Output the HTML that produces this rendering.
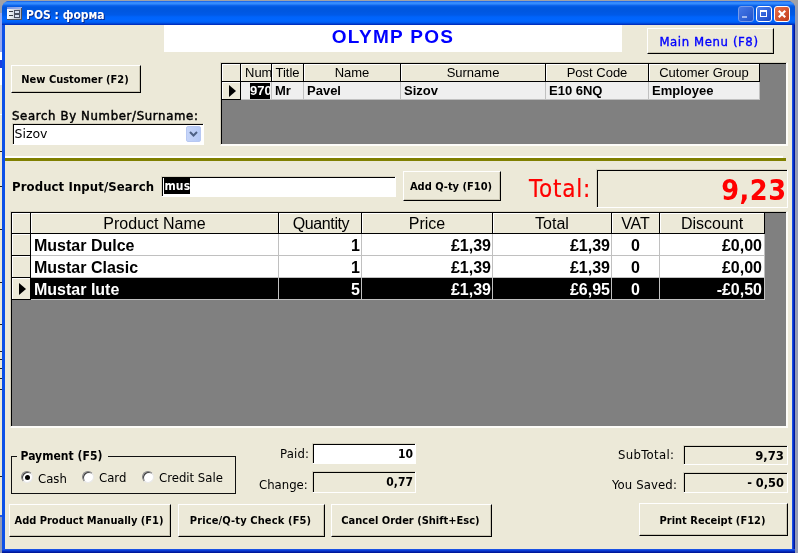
<!DOCTYPE html>
<html><head><meta charset="utf-8">
<style>
html,body{margin:0;padding:0;}
body{width:798px;height:553px;overflow:hidden;position:relative;background:#ECE9D8;font-family:"DejaVu Sans Condensed","DejaVu Sans","Liberation Sans",sans-serif;}
#root{will-change:transform;position:absolute;left:0;top:0;width:798px;height:553px;overflow:hidden;background:linear-gradient(#a2a2a6 0px,#a2a2a6 3px,#939bb5 12px);}
.abs{position:absolute;}
/* window */
#win{position:absolute;left:2px;top:1px;width:793px;height:552px;background:linear-gradient(90deg,#0c50e8 0px,#0c50e8 3px,#0a48d8 3px,#0a48d8 790px,#1a50e2 790px,#1a50e2 791px,#0830c8 791px,#0830c8 792px,#00189c 792px);border-radius:8px 8px 0 0;}
#tbar{position:absolute;left:0;top:0;width:793px;height:24px;border-radius:7px 7px 0 0;
 background:linear-gradient(#0a50e0 0px,#2d84fb 1px,#3a90ff 2px,#3088fc 3px,#0e64ec 4.5px,#0058e0 6px,#0057e0 10px,#005ae8 14px,#0064fb 16px,#0066ff 20px,#0058ea 22px,#0030c0 23.2px,#0030c0 24px);}
#client{position:absolute;left:3px;top:24px;width:787px;height:524px;background:#ECE9D8;overflow:hidden;}
#ttext{position:absolute;left:24px;top:6px;color:#fff;font-weight:bold;font-size:12px;line-height:16px;white-space:nowrap;font-family:"DejaVu Sans Condensed","DejaVu Sans",sans-serif;text-shadow:1px 1px 0 #0a2a8a;}
.cap{position:absolute;top:5px;width:16px;height:16px;border:1px solid #fff;border-radius:3px;box-sizing:border-box;}
/* controls; coordinates relative to root (page) */
.btn{position:absolute;box-sizing:border-box;background:#ECE9D8;border-top:1px solid #fff;border-left:1px solid #fff;border-right:1px solid #000;border-bottom:1px solid #000;
 box-shadow:inset -1px -1px 0 #c9c5b2;font-weight:bold;font-size:11px;color:#000;text-align:center;white-space:nowrap;padding-top:1px;padding-right:2px;}
.sunk{position:absolute;box-sizing:border-box;border-top:1px solid #d6d2c0;border-left:1px solid #d6d2c0;border-right:1px solid #fff;border-bottom:1px solid #fff;}
.sunk.two{border-right:2px solid #fdfcf8;border-bottom:2px solid #fdfcf8;}
.sunk>.in{position:absolute;left:0;top:0;right:0;bottom:0;border-top:1px solid #000;border-left:1px solid #000;}
.lbl{position:absolute;white-space:nowrap;font-size:13px;line-height:16px;color:#000;}
.b{font-weight:bold;}
.ar{font-family:"Liberation Sans",sans-serif;}
.hdr{position:absolute;box-sizing:border-box;background:#ECE9D8;border-right:1px solid #000;border-bottom:1px solid #000;box-shadow:inset 1px 1px 0 #fff;text-align:center;font-family:"Liberation Sans",sans-serif;white-space:nowrap;overflow:hidden;}
.cell{position:absolute;box-sizing:border-box;white-space:nowrap;overflow:hidden;font-family:"Liberation Sans",sans-serif;font-weight:bold;}
</style></head><body>
<div id="root">
 <!-- background bits left of the window -->
 <div class="abs" style="left:0;top:13px;width:2px;height:39px;background:#95a8ee"></div>
 <div class="abs" style="left:0;top:52px;width:2px;height:8px;background:#fff"></div>
 <div class="abs" style="left:0;top:60px;width:2px;height:8px;background:#1a40e0"></div>
 <div class="abs" style="left:0;top:68px;width:2px;height:17px;background:#fff"></div>
 <div class="abs" style="left:0;top:85px;width:2px;height:430px;background:#ECE9D8"></div>
 <div class="abs" style="left:0;top:114px;width:2px;height:1px;background:#fff"></div>
 <div class="abs" style="left:0;top:151px;width:2px;height:1px;background:#222"></div><div class="abs" style="left:0;top:186px;width:2px;height:1px;background:#222"></div><div class="abs" style="left:0;top:229px;width:2px;height:1px;background:#222"></div><div class="abs" style="left:0;top:282px;width:2px;height:1px;background:#222"></div><div class="abs" style="left:0;top:324px;width:2px;height:1px;background:#222"></div><div class="abs" style="left:0;top:351px;width:2px;height:1px;background:#222"></div><div class="abs" style="left:0;top:359px;width:2px;height:1px;background:#222"></div><div class="abs" style="left:0;top:368px;width:2px;height:1px;background:#222"></div><div class="abs" style="left:0;top:378px;width:2px;height:1px;background:#222"></div><div class="abs" style="left:0;top:389px;width:2px;height:1px;background:#222"></div><div class="abs" style="left:0;top:476px;width:2px;height:1px;background:#222"></div>
 <div class="abs" style="left:0;top:515px;width:2px;height:2px;background:#2a5be0"></div>
 <div id="win">
  <div id="tbar">
   <svg class="abs" style="left:5px;top:6px" width="15" height="13" viewBox="0 0 15 13">
    <defs><linearGradient id="ig" x1="0" x2="1" y1="0" y2="0"><stop offset="0" stop-color="#fbfcff"/><stop offset="1" stop-color="#aeb2c2"/></linearGradient>
    <linearGradient id="it" x1="0" x2="1" y1="0" y2="0"><stop offset="0" stop-color="#7a96e2"/><stop offset="1" stop-color="#9fb4ec"/></linearGradient></defs>
    <rect x="0" y="0" width="15" height="13" fill="url(#ig)"/><rect x="0" y="0" width="15" height="2" fill="url(#it)"/>
    <rect x="14" y="1" width="1" height="12" fill="#505058"/><rect x="0" y="12" width="15" height="1" fill="#505058"/>
    <rect x="2" y="4" width="4" height="1" fill="#3a3a44"/><rect x="2" y="8" width="4" height="1" fill="#3a3a44"/>
    <rect x="7.5" y="3.5" width="5" height="3" fill="#d8deef" stroke="#4a4e60"/><rect x="7.5" y="7.5" width="5" height="3" fill="#d8deef" stroke="#4a4e60"/>
   </svg>
   <div id="ttext">POS : форма</div>
   <div class="cap" style="left:736px;background:linear-gradient(135deg,#4a7be8,#2452c8);border-color:#7f9fe8;opacity:.95"><div class="abs" style="left:3px;bottom:3px;width:5px;height:2px;background:#a9bdf0"></div></div>
   <div class="cap" style="left:754px;background:linear-gradient(135deg,#4a80f0,#1c48c4)"><div class="abs" style="left:3px;top:3px;width:7px;height:7px;box-sizing:border-box;border:1px solid #fff;border-top:2px solid #fff"></div></div>
   <div class="cap" style="left:772px;background:linear-gradient(135deg,#e8714a,#c23a18)"><svg class="abs" style="left:0;top:0" width="14" height="14" viewBox="0 0 13 13"><path d="M3.5 3.5L9.5 9.5M9.5 3.5L3.5 9.5" stroke="#fff" stroke-width="2"/></svg></div>
  </div>
  <div id="client"></div>
  <div class="abs" style="left:0;top:548px;width:793px;height:4px;background:linear-gradient(#1a52e4 0px,#1a52e4 1px,#0a3cd6 1px,#0a3cd6 2px,#0428b6 2px,#0428b6 3px,#00189c 3px)"></div>
 </div>

 <!-- top area -->
 <div class="abs" style="left:164px;top:25px;width:458px;height:27px;background:#fff"></div>
 <div class="lbl ar b" id="olymp" style="left:164px;top:25px;width:458px;text-align:center;font-size:19px;line-height:24px;letter-spacing:1.3px;color:#0000ff">OLYMP POS</div>
 <div class="btn" id="bmain" style="left:647px;top:28px;width:127px;height:26px;font-size:13px;font-weight:normal;-webkit-text-stroke:0.35px #0000ff;letter-spacing:0.6px;padding-right:3px;line-height:23px;color:#0000ff"><span id="mm">Main Menu (F8)</span></div>
 <div class="btn" id="bnew" style="left:11px;top:65px;width:130px;height:28px;line-height:25px">New Customer (F2)</div>
 <div class="lbl" id="lsearch" style="left:12px;top:108px;letter-spacing:0.66px;-webkit-text-stroke:0.45px #000">Search By Number/Surname:</div>
 <div class="sunk" style="left:12px;top:123px;width:192px;height:22px;background:#fff"><div class="in"></div></div>
 <div class="lbl" id="tsizov" style="left:14.5px;top:126px;font-size:12.5px;font-family:'DejaVu Sans',sans-serif">Sizov</div>
 <div class="abs" id="cbtn" style="left:186px;top:126px;width:15px;height:16px;box-sizing:border-box;border:1px solid #b7c8f2;border-radius:2px;background:linear-gradient(90deg,#c6d5f9,#b4c9f6)">
  <svg class="abs" style="left:2px;top:4px" width="9" height="6" viewBox="0 0 9 6"><path d="M1 1L4.5 4.5L8 1" fill="none" stroke="#4d6185" stroke-width="2"/></svg></div>

 <!-- subform 1 -->
 <div class="sunk two" style="left:220px;top:62px;width:568px;height:84px;background:#808080"><div class="in"></div></div>
 <div class="hdr" style="left:222px;top:64px;width:19px;height:18px"></div>
 <div class="hdr" style="left:241px;top:64px;width:31px;height:18px;font-size:13px;line-height:17px" id="hnum"><span style="position:absolute;left:4px;top:0">Num</span></div>
 <div class="hdr" style="left:272px;top:64px;width:32px;height:18px;font-size:13px;line-height:17px">Title</div>
 <div class="hdr" style="left:304px;top:64px;width:97px;height:18px;font-size:13px;line-height:17px">Name</div>
 <div class="hdr" style="left:401px;top:64px;width:145px;height:18px;font-size:13px;line-height:17px">Surname</div>
 <div class="hdr" style="left:546px;top:64px;width:103px;height:18px;font-size:13px;line-height:17px">Post Code</div>
 <div class="hdr" style="left:649px;top:64px;width:111px;height:18px;font-size:13px;line-height:17px">Cutomer Group</div>
 <div class="hdr" style="left:222px;top:82px;width:19px;height:18px"><svg class="abs" style="left:7px;top:2.5px" width="7" height="12" viewBox="0 0 6 10" preserveAspectRatio="none"><path d="M0 0L6 5L0 10Z" fill="#000"/></svg></div>
 <div class="abs" style="left:241px;top:82px;width:519px;height:18px;background:#efefef;border-bottom:1px solid #c0c0c0;box-sizing:border-box"></div>
 <div class="abs" style="left:271px;top:82px;width:1px;height:18px;background:#c0c0c0"></div>
 <div class="abs" style="left:303px;top:82px;width:1px;height:18px;background:#c0c0c0"></div>
 <div class="abs" style="left:400px;top:82px;width:1px;height:18px;background:#c0c0c0"></div>
 <div class="abs" style="left:545px;top:82px;width:1px;height:18px;background:#c0c0c0"></div>
 <div class="abs" style="left:648px;top:82px;width:1px;height:18px;background:#c0c0c0"></div>
 <div class="abs" style="left:759px;top:82px;width:1px;height:18px;background:#c0c0c0"></div>
 <div class="cell" id="c970" style="left:250px;top:83px;width:20px;height:16px;font-size:13px;line-height:16px;background:#000;color:#fff">970</div>
 <div class="cell" style="left:275px;top:83px;font-size:13px;line-height:16px">Mr</div>
 <div class="cell" id="cpavel" style="left:307px;top:83px;font-size:13px;line-height:16px">Pavel</div>
 <div class="cell" style="left:404px;top:83px;font-size:13px;line-height:16px">Sizov</div>
 <div class="cell" style="left:549px;top:83px;font-size:13px;line-height:16px">E10 6NQ</div>
 <div class="cell" style="left:652px;top:83px;font-size:13px;line-height:16px">Employee</div>

 <!-- olive line -->
 <div class="abs" style="left:5px;top:156px;width:778px;height:2px;background:#fff"></div>
 <div class="abs" style="left:5px;top:158px;width:781px;height:3px;background:#808000"></div>

 <!-- product input row -->
 <div class="lbl b" id="lprod" style="left:12px;top:179px;letter-spacing:0.1px">Product Input/Search</div>
 <div class="sunk" style="left:161px;top:176px;width:235px;height:21px;background:#fff"><div class="in"></div></div>
 <div class="lbl b" id="tmus" style="left:164px;top:178px;height:16px;background:#000;color:#fff;padding:0 0 0 0.5px;font-size:12px;line-height:17px;letter-spacing:0.1px">mus</div>
 <div class="btn" id="bqty" style="left:403px;top:171px;width:98px;height:30px;line-height:27px">Add Q-ty (F10)</div>
 <div class="lbl" id="ltotal" style="left:529px;top:174.4px;font-size:24px;line-height:30px;letter-spacing:0.8px;-webkit-text-stroke:0.2px #f00;color:#ff0000">Total:</div>
 <div class="sunk" style="left:596px;top:169px;width:192px;height:39px"><div class="in"></div></div>
 <div class="lbl b" id="ttotal" style="left:600px;top:173px;width:186.5px;text-align:right;font-size:28.5px;line-height:36px;letter-spacing:0.5px;color:#ff0000">9,23</div>

 <!-- subform 2 -->
 <div class="sunk two" style="left:10px;top:211px;width:778px;height:217px;background:#808080"><div class="in"></div></div>
 <div class="hdr" style="left:12px;top:213px;width:19px;height:21px"></div>
 <div class="hdr" style="left:31px;top:213px;width:248px;height:21px;font-size:16px;line-height:21px" id="hpn">Product Name</div>
 <div class="hdr" style="left:279px;top:213px;width:83px;height:21px;font-size:16px;line-height:21px;letter-spacing:-0.4px;padding-left:2px">Quantity</div>
 <div class="hdr" style="left:362px;top:213px;width:131px;height:21px;font-size:16px;line-height:21px">Price</div>
 <div class="hdr" style="left:493px;top:213px;width:119px;height:21px;font-size:16px;line-height:21px">Total</div>
 <div class="hdr" style="left:612px;top:213px;width:48px;height:21px;font-size:16px;line-height:21px">VAT</div>
 <div class="hdr" style="left:660px;top:213px;width:105px;height:21px;font-size:16px;line-height:21px">Discount</div>
 <div class="hdr" style="left:12px;top:234px;width:19px;height:22px"></div>
 <div class="abs" style="left:31px;top:234px;width:734px;height:22px;background:#fff;box-sizing:border-box;border-bottom:1px solid #c0c0c0"></div>
 <div class="abs" style="left:278px;top:234px;width:1px;height:22px;background:#c0c0c0"></div>
 <div class="cell" id="r0c0" style="left:34px;text-align:left;width:243px;top:234px;height:21px;font-size:16px;line-height:23px;color:#000">Mustar Dulce</div>
 <div class="abs" style="left:361px;top:234px;width:1px;height:22px;background:#c0c0c0"></div>
 <div class="cell" id="r0c1" style="left:279px;text-align:right;width:81px;top:234px;height:21px;font-size:16px;line-height:23px;color:#000">1</div>
 <div class="abs" style="left:492px;top:234px;width:1px;height:22px;background:#c0c0c0"></div>
 <div class="cell" id="r0c2" style="left:362px;text-align:right;width:129px;top:234px;height:21px;font-size:16px;line-height:23px;color:#000">£1,39</div>
 <div class="abs" style="left:611px;top:234px;width:1px;height:22px;background:#c0c0c0"></div>
 <div class="cell" id="r0c3" style="left:493px;text-align:right;width:117px;top:234px;height:21px;font-size:16px;line-height:23px;color:#000">£1,39</div>
 <div class="abs" style="left:659px;top:234px;width:1px;height:22px;background:#c0c0c0"></div>
 <div class="cell" id="r0c4" style="left:612px;text-align:center;width:47px;top:234px;height:21px;font-size:16px;line-height:23px;color:#000">0</div>
 <div class="abs" style="left:764px;top:234px;width:1px;height:22px;background:#c0c0c0"></div>
 <div class="cell" id="r0c5" style="left:660px;text-align:right;width:102px;top:234px;height:21px;font-size:16px;line-height:23px;color:#000">£0,00</div>
 <div class="hdr" style="left:12px;top:256px;width:19px;height:22px"></div>
 <div class="abs" style="left:31px;top:256px;width:734px;height:22px;background:#fff;box-sizing:border-box;border-bottom:1px solid #c0c0c0"></div>
 <div class="abs" style="left:278px;top:256px;width:1px;height:22px;background:#c0c0c0"></div>
 <div class="cell" id="r1c0" style="left:34px;text-align:left;width:243px;top:256px;height:21px;font-size:16px;line-height:23px;color:#000">Mustar Clasic</div>
 <div class="abs" style="left:361px;top:256px;width:1px;height:22px;background:#c0c0c0"></div>
 <div class="cell" id="r1c1" style="left:279px;text-align:right;width:81px;top:256px;height:21px;font-size:16px;line-height:23px;color:#000">1</div>
 <div class="abs" style="left:492px;top:256px;width:1px;height:22px;background:#c0c0c0"></div>
 <div class="cell" id="r1c2" style="left:362px;text-align:right;width:129px;top:256px;height:21px;font-size:16px;line-height:23px;color:#000">£1,39</div>
 <div class="abs" style="left:611px;top:256px;width:1px;height:22px;background:#c0c0c0"></div>
 <div class="cell" id="r1c3" style="left:493px;text-align:right;width:117px;top:256px;height:21px;font-size:16px;line-height:23px;color:#000">£1,39</div>
 <div class="abs" style="left:659px;top:256px;width:1px;height:22px;background:#c0c0c0"></div>
 <div class="cell" id="r1c4" style="left:612px;text-align:center;width:47px;top:256px;height:21px;font-size:16px;line-height:23px;color:#000">0</div>
 <div class="abs" style="left:764px;top:256px;width:1px;height:22px;background:#c0c0c0"></div>
 <div class="cell" id="r1c5" style="left:660px;text-align:right;width:102px;top:256px;height:21px;font-size:16px;line-height:23px;color:#000">£0,00</div>
 <div class="hdr" style="left:12px;top:278px;width:19px;height:22px"><svg class="abs" style="left:7px;top:5px" width="7" height="12" viewBox="0 0 6 10" preserveAspectRatio="none"><path d="M0 0L6 5L0 10Z" fill="#000"/></svg></div>
 <div class="abs" style="left:31px;top:278px;width:734px;height:22px;background:#000;box-sizing:border-box;border-bottom:1px solid #c0c0c0"></div>
 <div class="abs" style="left:278px;top:278px;width:1px;height:22px;background:#c0c0c0"></div>
 <div class="cell" id="r2c0" style="left:34px;text-align:left;width:243px;top:278px;height:21px;font-size:16px;line-height:23px;color:#fff">Mustar Iute</div>
 <div class="abs" style="left:361px;top:278px;width:1px;height:22px;background:#c0c0c0"></div>
 <div class="cell" id="r2c1" style="left:279px;text-align:right;width:81px;top:278px;height:21px;font-size:16px;line-height:23px;color:#fff">5</div>
 <div class="abs" style="left:492px;top:278px;width:1px;height:22px;background:#c0c0c0"></div>
 <div class="cell" id="r2c2" style="left:362px;text-align:right;width:129px;top:278px;height:21px;font-size:16px;line-height:23px;color:#fff">£1,39</div>
 <div class="abs" style="left:611px;top:278px;width:1px;height:22px;background:#c0c0c0"></div>
 <div class="cell" id="r2c3" style="left:493px;text-align:right;width:117px;top:278px;height:21px;font-size:16px;line-height:23px;color:#fff">£6,95</div>
 <div class="abs" style="left:659px;top:278px;width:1px;height:22px;background:#c0c0c0"></div>
 <div class="cell" id="r2c4" style="left:612px;text-align:center;width:47px;top:278px;height:21px;font-size:16px;line-height:23px;color:#fff">0</div>
 <div class="abs" style="left:764px;top:278px;width:1px;height:22px;background:#c0c0c0"></div>
 <div class="cell" id="r2c5" style="left:660px;text-align:right;width:102px;top:278px;height:21px;font-size:16px;line-height:23px;color:#fff">-£0,50</div>

 <!-- payment group -->
 <div class="abs" style="left:11px;top:456px;width:225px;height:38px;box-sizing:border-box;border:1px solid #111"></div>
 <div class="lbl b" id="lpay" style="left:17px;top:448px;font-size:12px;letter-spacing:0.05px;background:#ECE9D8;padding:0 5px 0 3.5px">Payment (F5)</div>
 <div class="abs radio" style="left:21px;top:471px"></div>
 <div class="abs radio" style="left:82px;top:471px"></div>
 <div class="abs radio" style="left:141.5px;top:471px"></div>
 <div class="abs" style="left:25px;top:475px;width:5px;height:5px;border-radius:3px;background:#000"></div>
 <div class="lbl" id="lcash" style="left:38px;top:471px">Cash</div>
 <div class="lbl" id="lcard" style="left:99px;top:470px">Card</div>
 <div class="lbl" id="lcredit" style="left:159px;top:470px">Credit Sale</div>

 <div class="lbl" id="lpaid" style="left:280px;top:446px;letter-spacing:0.2px">Paid:</div>
 <div class="sunk" style="left:312px;top:443px;width:104px;height:21px;background:#fff"><div class="in"></div></div>
 <div class="lbl b" id="tpaid" style="left:320px;top:446px;width:93px;text-align:right;font-size:12px">10</div>
 <div class="lbl" id="lchange" style="left:259px;top:476.6px">Change:</div>
 <div class="sunk" style="left:312px;top:471px;width:104px;height:22px"><div class="in"></div></div>
 <div class="lbl b" id="tchange" style="left:320px;top:474px;width:93px;text-align:right;font-size:12px">0,77</div>

 <div class="lbl" id="lsub" style="left:618px;top:447px;letter-spacing:0.33px">SubTotal:</div>
 <div class="sunk" style="left:683px;top:445px;width:105px;height:20px"><div class="in"></div></div>
 <div class="lbl b" id="tsub" style="left:690px;top:447.5px;width:94px;text-align:right;font-size:13px">9,73</div>
 <div class="lbl" id="lsaved" style="left:612px;top:476.6px;letter-spacing:0.12px">You Saved:</div>
 <div class="sunk" style="left:683px;top:472px;width:105px;height:21px"><div class="in"></div></div>
 <div class="lbl b" id="tsaved" style="left:690px;top:475px;width:94px;text-align:right;font-size:12.7px">- 0,50</div>

 <div class="btn" id="badd" style="left:9px;top:504px;width:162px;height:33px;line-height:30px">Add Product Manually (F1)</div>
 <div class="btn" id="bprice" style="left:178px;top:504px;width:147px;height:33px;line-height:30px;letter-spacing:0.13px">Price/Q-ty Check (F5)</div>
 <div class="btn" id="bcancel" style="left:331px;top:504px;width:161px;height:33px;line-height:30px">Cancel Order (Shift+Esc)</div>
 <div class="btn" id="bprint" style="left:639px;top:503px;width:149px;height:33px;line-height:32px">Print Receipt (F12)</div>
</div>
<style>
.radio{width:12px;height:12px;box-sizing:border-box;border-radius:6px;background:#fff;border:1px solid #808080;border-right-color:#e8e8e8;border-bottom-color:#e8e8e8;box-shadow:inset 1px 1px 0 #404040;}
.row{position:absolute;left:12px;width:754px;height:22px;}
</style>
</body></html>
